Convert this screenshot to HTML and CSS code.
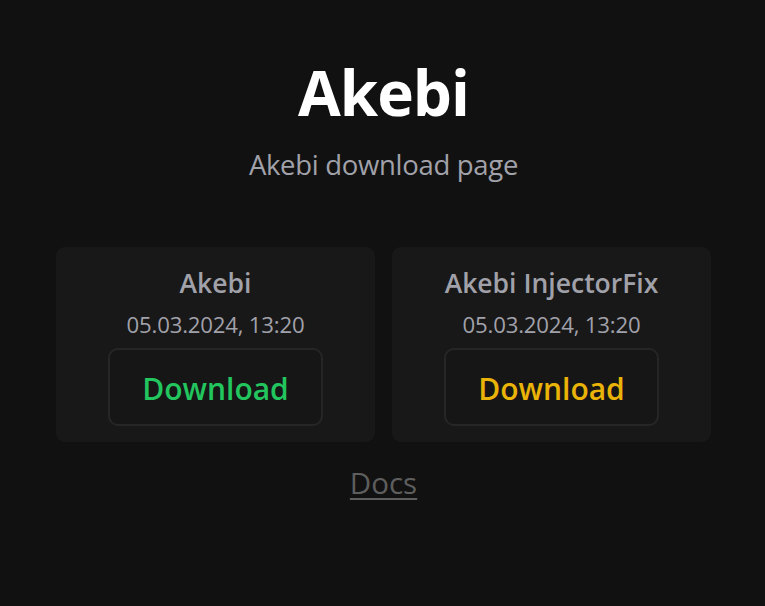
FILE: index.html
```html
<!DOCTYPE html>
<html lang="en">
<head>
<meta charset="utf-8">
<title>Akebi</title>
<link rel="stylesheet" href="styles.css">
</head>
<body>
<main class="page">
  <h1 class="title">Akebi</h1>
  <p class="subtitle">Akebi download page</p>
  <section class="cards">
    <div class="card">
      <h2 class="card-title">Akebi</h2>
      <div class="card-date">05.03.2024, 13:20</div>
      <a class="btn btn-green" href="#">Download</a>
    </div>
    <div class="card">
      <h2 class="card-title">Akebi InjectorFix</h2>
      <div class="card-date">05.03.2024, 13:20</div>
      <a class="btn btn-yellow" href="#">Download</a>
    </div>
  </section>
  <a class="docs" href="#">Docs</a>
</main>
</body>
</html>
```
FILE: styles.css
```css
html, body {
  margin: 0;
  padding: 0;
  background: #111111;
  height: 100%;
}
body {
  font-family: "Open Sans", "Noto Sans", sans-serif;
}
.page {
  display: flex;
  flex-direction: column;
  align-items: center;
  padding-top: 52px;
  padding-left: 2px;
}
.title {
  margin: 0;
  font-size: 62px;
  font-weight: 700;
  color: #ffffff;
  line-height: 80px;
  letter-spacing: -1px;
}
.subtitle {
  margin: 17px 0 0;
  font-size: 27.5px;
  color: #a1a1aa;
  line-height: 32px;
  letter-spacing: -0.3px;
}
.cards {
  display: flex;
  gap: 17px;
  margin-top: 66px;
}
.card {
  width: 319px;
  height: 195px;
  box-sizing: border-box;
  background: #181818;
  border-radius: 9px;
  display: flex;
  flex-direction: column;
  align-items: center;
  padding-top: 20px;
}
.card-title {
  margin: 0;
  font-size: 26.5px;
  font-weight: 600;
  color: #a1a1aa;
  line-height: 32px;
  letter-spacing: 0;
}
.card-date {
  margin-top: 11px;
  font-size: 22.2px;
  color: #a1a1aa;
  line-height: 30px;
  letter-spacing: -0.2px;
}
.btn {
  margin-top: 8px;
  width: 215px;
  height: 78px;
  box-sizing: border-box;
  border: 2px solid #262626;
  border-radius: 10px;
  background: #161616;
  display: flex;
  align-items: center;
  justify-content: center;
  padding-top: 3px;
  font-size: 30px;
  font-weight: 600;
  text-decoration: none;
  letter-spacing: 0;
}
.btn-green { color: #22c55e; }
.btn-yellow { color: #eab308; }
.docs {
  margin-top: 23px;
  font-size: 29.5px;
  color: #5e5e5e;
  line-height: 36px;
  letter-spacing: 0;
  text-decoration: underline;
  text-underline-offset: 4px;
  text-decoration-thickness: 2px;
}
```
